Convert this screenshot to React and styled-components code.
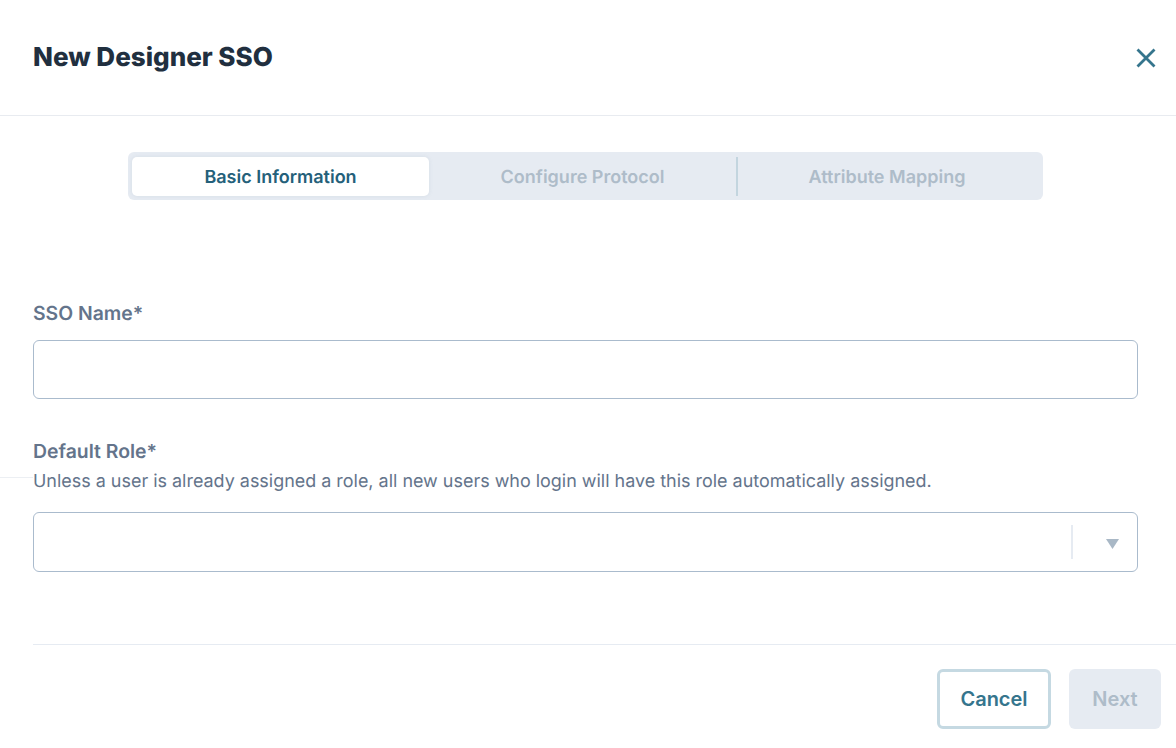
import styled, { createGlobalStyle } from 'styled-components';

const GlobalStyle = createGlobalStyle`
  html, body {
    margin: 0;
    padding: 0;
    background: #fff;
    font-family: Inter, "Liberation Sans", sans-serif;
    text-rendering: geometricPrecision;
  }
`;

function Tabs() {
  return (
    <TabBar>
      <Tab $active $width={297}>Basic Information</Tab>
      <Tab $width={307}>Configure Protocol</Tab>
      <TabDivider />
      <LastTab>Attribute Mapping</LastTab>
    </TabBar>
  );
}

export default function App() {
  return (
    <>
      <GlobalStyle />
      <Modal>
        <StrayLine />
        <Header>
          <Title>New Designer SSO</Title>
          <CloseButton aria-label="Close">
            <svg width="20" height="20" viewBox="0 0 20 20" fill="none" stroke="#35758d" strokeWidth="2.8">
              <path d="M1.5 1.5 18.5 18.5M18.5 1.5 1.5 18.5" />
            </svg>
          </CloseButton>
        </Header>
        <Body>
          <Tabs />
          <Form>
            <Field>
              <Label>SSO Name*</Label>
              <TextInput />
            </Field>
            <RoleField>
              <Label>Default Role*</Label>
              <Help>Unless a user is already assigned a role, all new users who login will have this role automatically assigned.</Help>
              <Select>
                <SelectDivider />
                <Caret>
                  <svg width="13" height="10" viewBox="0 0 13 10" fill="#a9b8c6">
                    <path d="M0 0h13L6.5 10z" />
                  </svg>
                </Caret>
              </Select>
            </RoleField>
          </Form>
        </Body>
        <Footer>
          <CancelButton>Cancel</CancelButton>
          <NextButton disabled>Next</NextButton>
        </Footer>
      </Modal>
    </>
  );
}

const Modal = styled.div`
  position: relative;
  width: 1176px;
  height: 748px;
  background: #fff;
  overflow: hidden;
  display: flex;
  flex-direction: column;
`;
const StrayLine = styled.div`
  position: absolute;
  left: 0;
  top: 477px;
  width: 33px;
  height: 1px;
  background: #eceff3;
`;
const Header = styled.header`
  height: 115px;
  box-sizing: content-box;
  border-bottom: 1px solid #e8ebf0;
  display: flex;
  align-items: center;
  justify-content: space-between;
  padding: 0 20px 0 33px;
`;
const Title = styled.h1`
  margin: 0;
  font-size: 26px;
  line-height: 32px;
  font-weight: 800;
  color: #212f3f;
`;
const CloseButton = styled.button`
  width: 20px;
  height: 20px;
  padding: 0;
  border: none;
  background: none;
  display: flex;
`;
const Body = styled.main`
  flex: 1;
  padding: 36px 38px 0 33px;
`;
const TabBar = styled.div`
  width: 915px;
  height: 48px;
  margin-left: 95px;
  box-sizing: border-box;
  padding: 5px 0 4px 4px;
  border-radius: 6px;
  background: #e6ebf2;
  display: flex;
  align-items: stretch;
`;
const Tab = styled.div`
  width: ${p => p.$width}px;
  box-sizing: border-box;
  padding-top: 2px;
  display: flex;
  align-items: center;
  justify-content: center;
  font-size: 18px;
  font-weight: 600;
  border-radius: 5px;
  color: ${p => (p.$active ? '#24607a' : '#aebcc9')};
  background: ${p => (p.$active ? '#fff' : 'transparent')};
  box-shadow: ${p => (p.$active ? '0 0 4px rgba(120, 145, 165, 0.15)' : 'none')};
`;
const LastTab = styled(Tab)`
  width: auto;
  flex: 1;
  padding-right: 7px;
`;
const TabDivider = styled.div`
  width: 2px;
  background: #c3d5df;
`;
const Form = styled.div`
  margin-top: 101px;
  display: flex;
  flex-direction: column;
`;
const Field = styled.div`
  display: flex;
  flex-direction: column;
`;
const RoleField = styled(Field)`
  margin-top: 40px;
`;
const Label = styled.label`
  font-size: 19.4px;
  line-height: 24px;
  font-weight: 600;
  color: #64748b;
`;
const Help = styled.p`
  margin: 7px 0 0;
  font-size: 17.95px;
  line-height: 24px;
  color: #64748b;
`;
const TextInput = styled.input`
  display: block;
  margin-top: 15px;
  width: 100%;
  height: 59px;
  box-sizing: border-box;
  border: 1px solid #aabbcd;
  border-radius: 6px;
  background: #fff;
`;
const Select = styled.div`
  margin-top: 18px;
  height: 60px;
  box-sizing: border-box;
  border: 1px solid #aabbcd;
  border-radius: 6px;
  display: flex;
  align-items: center;
  justify-content: flex-end;
`;
const SelectDivider = styled.div`
  width: 2px;
  height: 34px;
  background: #e6ebf2;
`;
const Caret = styled.div`
  width: 64px;
  display: flex;
  align-items: center;
  justify-content: center;
  padding: 4px 0 0 15px;
  box-sizing: border-box;
`;
const Footer = styled.footer`
  margin-left: 33px;
  height: 104px;
  box-sizing: border-box;
  border-top: 1px solid #e6ebf2;
  padding: 24px 15px 0 0;
  display: flex;
  justify-content: flex-end;
  align-items: flex-start;
  gap: 18px;
`;
const CancelButton = styled.button`
  width: 114px;
  height: 60px;
  box-sizing: border-box;
  border: 3px solid #c5d9e2;
  border-radius: 6px;
  background: #fff;
  color: #35758d;
  font: 600 20px Inter, sans-serif;
`;
const NextButton = styled.button`
  width: 92px;
  height: 60px;
  border: none;
  border-radius: 6px;
  background: #e6ebf2;
  color: #aebcc9;
  font: 600 20px Inter, sans-serif;
`;
